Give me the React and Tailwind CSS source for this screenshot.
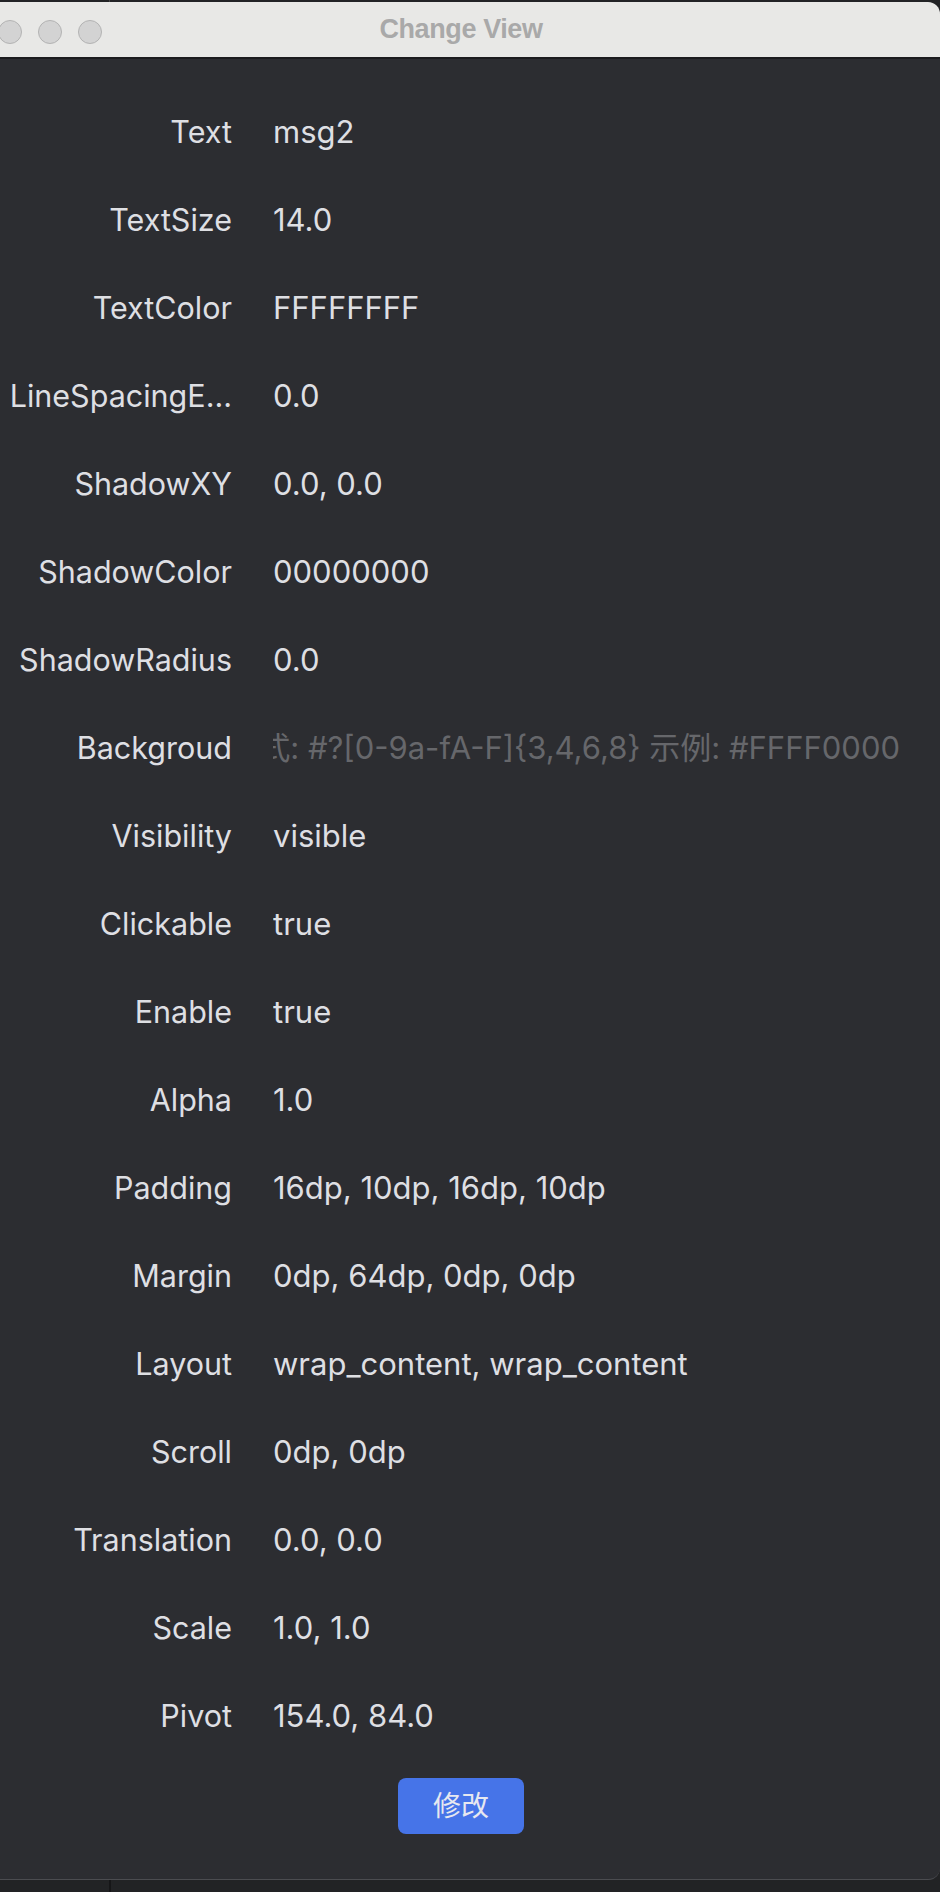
import React from 'react';

const rows = [
  ['Text', 'msg2'],
  ['TextSize', '14.0'],
  ['TextColor', 'FFFFFFFF'],
  ['LineSpacingE...', '0.0'],
  ['ShadowXY', '0.0, 0.0'],
  ['ShadowColor', '00000000'],
  ['ShadowRadius', '0.0'],
  ['Backgroud', null],
  ['Visibility', 'visible'],
  ['Clickable', 'true'],
  ['Enable', 'true'],
  ['Alpha', '1.0'],
  ['Padding', '16dp, 10dp, 16dp, 10dp'],
  ['Margin', '0dp, 64dp, 0dp, 0dp'],
  ['Layout', 'wrap_content, wrap_content'],
  ['Scroll', '0dp, 0dp'],
  ['Translation', '0.0, 0.0'],
  ['Scale', '1.0, 1.0'],
  ['Pivot', '154.0, 84.0'],
];

const font = { fontFamily: 'Inter, "Noto Sans CJK SC", sans-serif' };

const Row = ({ label, value }) => (
  <div className="flex items-center h-[88px]">
    <div className="w-[250px] shrink-0 text-right whitespace-nowrap text-[30.5px] text-[#dedfe3]">{label}</div>
    <div className="ml-[41px] w-[627px] flex overflow-hidden">
      {value === null ? (
        <div className="flex w-full justify-end overflow-hidden">
          <span className="shrink-0 whitespace-nowrap text-[#66676b]">
            格式: #?[0-9a-fA-F]{'{'}3,4,6,8{'}'} 示例: #FFFF0000
          </span>
        </div>
      ) : (
        <span className="whitespace-nowrap text-[#dedfe3]">{value}</span>
      )}
    </div>
  </div>
);

const App = () => {
  return (
    <div className="w-[940px] h-[1892px] bg-[#222325] flex flex-col overflow-hidden" style={font}>
      {/* top strip */}
      <div className="h-[2px] flex shrink-0">
        <div className="w-[110px] border-r border-[#444]" />
      </div>

      {/* window, its left edge sits off screen */}
      <div className="ml-[-18px] w-[958px] h-[1878px] flex flex-col rounded-tr-[12px] rounded-br-[12px] overflow-hidden border-b border-[#4b4c50] bg-[#2c2d31]">
        <div className="h-[57px] shrink-0 bg-[#e8e8e6] border-b-2 border-[#1c1c1e] relative flex items-center justify-center">
          <div className="absolute left-[16px] top-[18px] flex gap-[16px]">
            <div className="w-[24px] h-[24px] rounded-full bg-[#d3d3d3] border border-[#b3b3b3]" />
            <div className="w-[24px] h-[24px] rounded-full bg-[#d3d3d3] border border-[#b3b3b3]" />
            <div className="w-[24px] h-[24px] rounded-full bg-[#d3d3d3] border border-[#b3b3b3]" />
          </div>
          <span
            className="text-[27px] font-bold text-[#a9a9a9] tracking-[-0.4px]"
            style={{ fontFamily: '"Liberation Sans", Arial, sans-serif' }}
          >
            Change View
          </span>
        </div>

        <div className="flex-1 flex flex-col pt-[29px] text-[31px]">
          {rows.map(([label, value]) => (
            <Row key={label} label={label} value={value} />
          ))}

          <div className="flex justify-center mt-[18px]">
            <button className="w-[126px] h-[56px] rounded-[8px] bg-[#4674e8] text-[#e6e8f0] text-[28px] flex items-center justify-center">
              修改
            </button>
          </div>
        </div>
      </div>

      {/* below window */}
      <div className="flex-1 flex">
        <div className="w-[111px] border-r-2 border-[#161618]" />
      </div>
    </div>
  );
};

export default App;
